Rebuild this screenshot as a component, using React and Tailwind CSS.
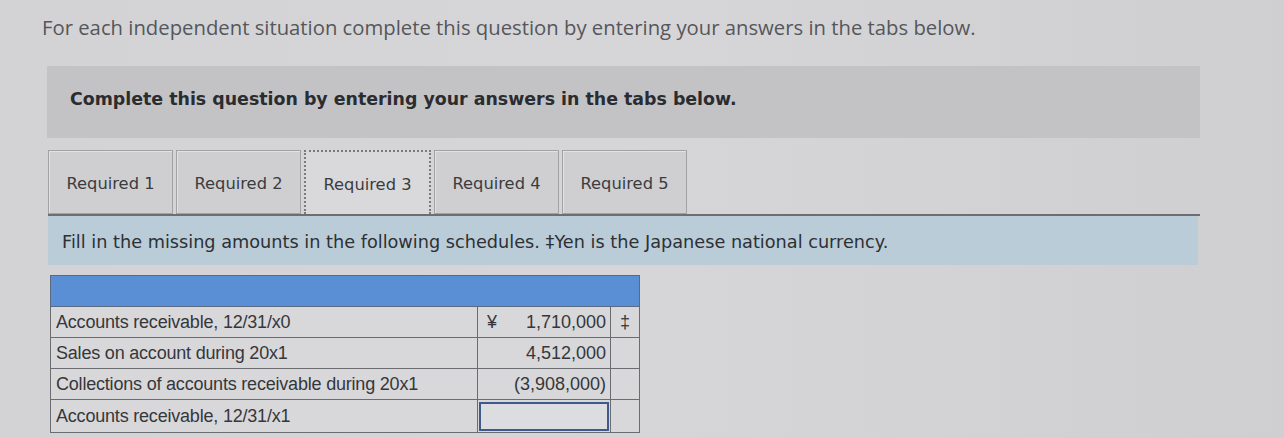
export default function App() {
  const tabs = ["Required 1", "Required 2", "Required 3", "Required 4", "Required 5"];
  const rows = [
    { label: "Accounts receivable, 12/31/x0", sym: "¥", value: "1,710,000", mark: "‡" },
    { label: "Sales on account during 20x1", value: "4,512,000" },
    { label: "Collections of accounts receivable during 20x1", value: "(3,908,000)" },
    { label: "Accounts receivable, 12/31/x1", input: true },
  ];

  return (
    <div className="w-[1284px] h-[438px] overflow-hidden bg-gradient-to-r from-[#d3d3d5] via-[#d6d6d8] to-[#cfcfd1]">
      <p className="pt-[13px] pl-[42px] text-[20.3px] leading-[28px] text-[#55575b] font-['Open_Sans',sans-serif]">
        For each independent situation complete this question by entering your answers in the tabs below.
      </p>

      <div className="ml-[47px] mt-[25px] w-[1153px] h-[72px] bg-[#c3c3c5] flex items-center pl-[23px] pb-[5px]">
        <span className="text-[17.4px] font-bold text-[#2a2c30] font-['DejaVu_Sans',sans-serif]">
          Complete this question by entering your answers in the tabs below.
        </span>
      </div>

      <div className="ml-[48px] mt-[12px] w-[1152px]">
        <div className="flex gap-[3px] h-[64px]">
          {tabs.map((t, i) => (
            <div
              key={t}
              className={
                i === 2
                  ? "w-[127px] flex items-center justify-center pt-[5px] bg-[#d9d9db] border-2 border-dotted border-[#7a7a7c] border-b-0 text-[16.3px] text-[#3a3c40] font-['DejaVu_Sans',sans-serif]"
                  : "w-[125px] flex items-center justify-center pt-[5px] bg-[#cfcfd1] border border-[#a2a2a4] shadow-[inset_1px_1px_0_#e2e2e4] text-[16.3px] text-[#3a3c40] font-['DejaVu_Sans',sans-serif]"
              }
            >
              {t}
            </div>
          ))}
        </div>
        <div className="h-[2px] bg-[#6b6e72]" />
        <div className="h-[49px] w-[1150px] bg-[#b9ccd8] flex items-center pl-[14px] pt-[4px] text-[17.7px] text-[#2e3034] font-['DejaVu_Sans',sans-serif]">
          Fill in the missing amounts in the following schedules. ‡Yen is the Japanese national currency.
        </div>
      </div>

      <div className="ml-[50px] mt-[10px] w-[590px] font-['Liberation_Sans',Arial,sans-serif] text-[18px] text-[#35373b]">
        <div className="h-[32px] bg-[#5b8fd5] border border-[#5a6a80]" />
        <div className="border-x border-b border-[#6a6c70]">
          {rows.map((r, i) => (
            <div
              key={r.label}
              className={
                "flex bg-[#d8d8da] " + (i < rows.length - 1 ? "border-b border-[#6a6c70] h-[31px]" : "h-[32px]")
              }
            >
              <div className="w-[427px] flex items-center pl-[5px] border-r border-[#6a6c70] tracking-[-0.2px]">{r.label}</div>
              <div className="w-[133px] flex items-center justify-between px-[4px] border-r border-[#6a6c70]">
                {r.input ? (
                  <div className="-mx-[3px] w-[133px] h-[29px] border-2 border-[#3f5a8a] bg-[#dcdde0]" />
                ) : (
                  <>
                    <span className="pl-[5px]">{r.sym || ""}</span>
                    <span>{r.value}</span>
                  </>
                )}
              </div>
              <div className="flex-1 flex items-center justify-center">{r.mark || ""}</div>
            </div>
          ))}
        </div>
      </div>
    </div>
  );
}
